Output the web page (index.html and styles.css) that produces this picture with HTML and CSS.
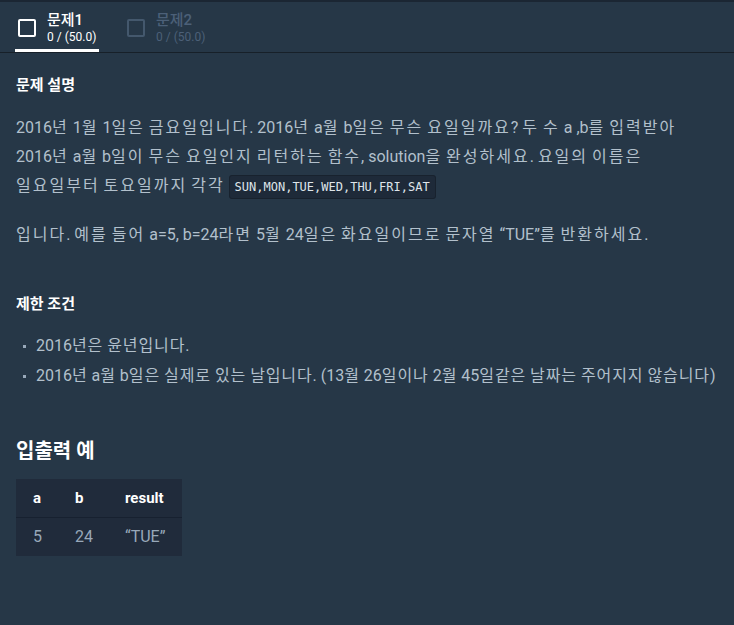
FILE: index.html
```html
<!DOCTYPE html>
<html lang="ko">
<head>
<meta charset="utf-8">
<link rel="stylesheet" href="styles.css">
</head>
<body>
<div class="topline"></div>
<nav class="tabs">
  <div class="tab active">
    <span class="check"></span>
    <div class="tab-text">
      <div class="tab-title">문제1</div>
      <div class="tab-score">0 / (50.0)</div>
    </div>
  </div>
  <div class="tab">
    <span class="check"></span>
    <div class="tab-text">
      <div class="tab-title">문제2</div>
      <div class="tab-score">0 / (50.0)</div>
    </div>
  </div>
</nav>
<main class="content">
  <h5 class="sub">문제 설명</h5>
  <p class="desc">2016<span class="h">년</span> 1<span class="h">월</span> 1<span class="h">일은</span> <span class="h">금요일입니다</span>. 2016<span class="h">년</span> a<span class="h">월</span> b<span class="h">일은</span> <span class="h">무슨</span> <span class="h">요일일까요</span>? <span class="h">두</span> <span class="h">수</span> a ,b<span class="h">를</span> <span class="h">입력받아</span> 2016<span class="h">년</span> a<span class="h">월</span> b<span class="h">일이</span> <span class="h">무슨</span> <span class="h">요일인지</span> <span class="h">리턴하는</span> <span class="h">함수</span>, solution<span class="h">을</span> <span class="h">완성하세요</span>. <span class="h">요일의</span> <span class="h">이름은</span> <span class="h">일요일부터</span> <span class="h">토요일까지</span> <span class="h">각각</span> <code>SUN,MON,TUE,WED,THU,FRI,SAT</code></p>
  <p class="desc"><span class="h">입니다</span>. <span class="h">예를</span> <span class="h">들어</span> a=5, b=24<span class="h">라면</span> 5<span class="h">월</span> 24<span class="h">일은</span> <span class="h">화요일이므로</span> <span class="h">문자열</span> “TUE”<span class="h">를</span> <span class="h">반환하세요</span>.</p>
  <h5 class="sub sub-gap">제한 조건</h5>
  <ul class="rules">
    <li>2016<span class="h">년은</span> <span class="h">윤년입니다</span>.</li>
    <li>2016<span class="h">년</span> a<span class="h">월</span> b<span class="h">일은</span> <span class="h">실제로</span> <span class="h">있는</span> <span class="h">날입니다</span>. (13<span class="h">월</span> 26<span class="h">일이나</span> 2<span class="h">월</span> 45<span class="h">일같은</span> <span class="h">날짜는</span> <span class="h">주어지지</span> <span class="h">않습니다</span>)</li>
  </ul>
  <h5 class="big">입출력 예</h5>
  <table class="io">
    <thead>
      <tr><th>a</th><th>b</th><th>result</th></tr>
    </thead>
    <tbody>
      <tr><td>5</td><td>24</td><td>“TUE”</td></tr>
    </tbody>
  </table>
</main>
</body>
</html>
```
FILE: styles.css
```css
html, body {
  margin: 0;
  padding: 0;
  background: #263747;
  font-family: Roboto, "Noto Sans CJK KR", sans-serif;
  color: #b2c0cc;
}
.topline {
  height: 2px;
  background: #1b2633;
}
.tabs {
  display: flex;
  gap: 25px;
  height: 51px;
  padding-left: 15px;
  border-bottom: 1px solid #172029;
  box-sizing: border-box;
}
.tab {
  display: flex;
  align-items: center;
  gap: 11px;
  padding: 0 0 0 3px;
  width: 84px;
  box-sizing: border-box;
  position: relative;
}
.tab.active::after {
  content: "";
  position: absolute;
  left: 0;
  right: 0;
  bottom: 0;
  height: 3px;
  background: #ffffff;
}
.check {
  width: 14px;
  height: 14px;
  border: 2px solid #ffffff;
  border-radius: 2px;
  flex: none;
  margin-top: 1px;
}
.tab:not(.active) .check {
  border-color: #44586d;
}
.tab-text {
  display: flex;
  flex-direction: column;
}
.tab-title {
  font-size: 15px;
  font-weight: 500;
  line-height: 20px;
  color: #ffffff;
}
.tab-score {
  font-size: 12px;
  line-height: 15px;
  color: #ffffff;
}
.tab:not(.active) .tab-title,
.tab:not(.active) .tab-score {
  color: #4c6078;
}
.content {
  padding: 0 16px;
  word-break: keep-all;
}
.sub {
  margin: 22px 0 0;
  font-size: 15px;
  font-weight: 700;
  line-height: 20px;
  color: #ffffff;
}
.sub-gap {
  margin-top: 45px;
}
.desc {
  margin: 18px 0 0;
  font-size: 16px;
  line-height: 29px;
}
.desc .h {
  letter-spacing: 2px;
}
.desc + .desc {
  margin-top: 18px;
}
code {
  font-family: "DejaVu Sans Mono", monospace;
  font-size: 12px;
  background: #1e2a39;
  border: 1px solid #18222e;
  border-radius: 3px;
  padding: 4px 5px;
  color: #dfe5ea;
}
.rules {
  list-style: none;
  margin: 17px 0 0;
  padding: 0;
}
.rules li {
  position: relative;
  padding-left: 20px;
  font-size: 16px;
  line-height: 30px;
}
.rules .h {
  letter-spacing: 0.9px;
}
.rules li::before {
  content: "";
  position: absolute;
  left: 7px;
  top: 14px;
  width: 3px;
  height: 3px;
  background: #98a8b9;
}
.big {
  margin: 47px 0 0;
  font-size: 20px;
  font-weight: 700;
  line-height: 26px;
  color: #ffffff;
}
.io {
  margin-top: 15px;
  border-collapse: collapse;
  background: #202b3b;
  font-size: 16px;
}
.io th {
  height: 38px;
  padding: 0;
  text-align: left;
  font-weight: 700;
  font-size: 15px;
  color: #ffffff;
  border-bottom: 1px solid #172130;
  box-sizing: border-box;
}
.io td {
  height: 38px;
  padding: 0;
  color: #98a8b9;
}
.io th:first-child, .io td:first-child {
  padding-left: 17px;
  width: 25px;
}
.io th:nth-child(2), .io td:nth-child(2) {
  padding-left: 17px;
  width: 33px;
}
.io th:nth-child(3), .io td:nth-child(3) {
  padding-left: 17px;
  padding-right: 17px;
}
```
